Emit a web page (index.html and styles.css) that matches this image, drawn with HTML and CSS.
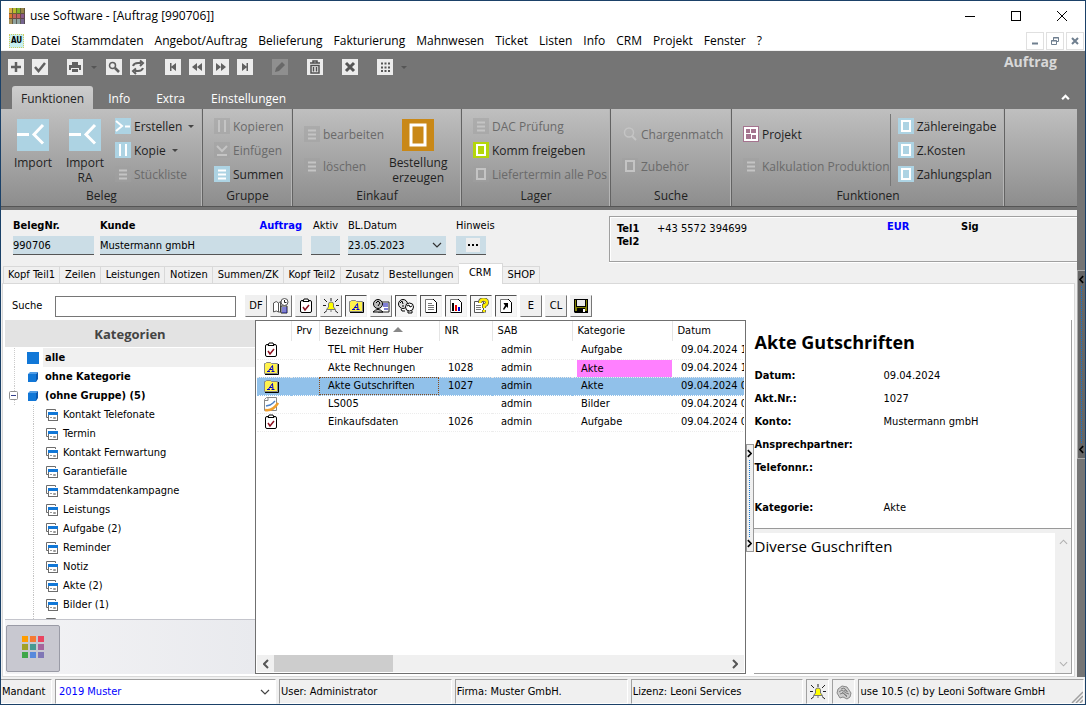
FILE: index.html
```html
<!DOCTYPE html>
<html lang="de">
<head>
<meta charset="utf-8">
<title>use Software - [Auftrag [990706]]</title>
<link rel="stylesheet" href="styles.css">
</head>
<body>
<svg class="defs" aria-hidden="true">
  <symbol id="lines" viewBox="0 0 16 16"><path d="M4 4.500h8M4 8.500h8M4 12.500h8" stroke="currentColor" stroke-width="2"/></symbol>
  <symbol id="bars" viewBox="0 0 16 16"><path d="M5 2v12M11 2v12" stroke="currentColor" stroke-width="2"/></symbol>
  <symbol id="box" viewBox="0 0 16 16"><rect x="4" y="3" width="8" height="10" fill="none" stroke="currentColor" stroke-width="2"/></symbol>
  <symbol id="create" viewBox="0 0 16 16"><path d="M1 3l6 5-6 5M10 8.500h5" fill="none" stroke="currentColor" stroke-width="2"/></symbol>
  <symbol id="paste" viewBox="0 0 16 16"><path d="M3 4l5 5 5-5M3 13h10" fill="none" stroke="currentColor" stroke-width="2"/></symbol>
  <symbol id="lens" viewBox="0 0 16 16"><circle cx="7" cy="6.500" r="4.500" fill="none" stroke="currentColor" stroke-width="1.500"/><path d="M10 10l4 4" stroke="currentColor" stroke-width="2"/></symbol>
  <symbol id="import" viewBox="0 0 32 32"><path d="M0 15.500h12M26 6L17 15.500l9 9" fill="none" stroke="currentColor" stroke-width="3"/></symbol>
  <symbol id="order" viewBox="0 0 32 32"><rect x="9" y="6" width="14" height="20" fill="none" stroke="currentColor" stroke-width="3"/></symbol>
  <symbol id="project" viewBox="0 0 16 16"><rect x=".5" y=".5" width="15" height="15" fill="#fff" stroke="#a5748f"/><path d="M3 3h4v4H3zM8 3h5v4H8zM3 8h5v5H3zM9 9h4v4H9z" fill="#a5748f"/></symbol>
  <symbol id="clip" viewBox="0 0 16 16"><rect x="2.500" y="2.500" width="11" height="12" rx="1.500" fill="#fff" stroke="#000"/><path d="M5 3.500h6L10 1H6z" fill="#fff" stroke="#000"/><path d="M5 9l2 3 4-5" fill="none" stroke="#8b1020" stroke-width="1.500"/></symbol>
  <symbol id="akte" viewBox="0 0 16 16"><path d="M1.500 13.500v-10h1l1-1h4l1 1h6v10z" fill="#fff24d" stroke="#888"/><path d="M15.500 4v10.500H2" fill="none" stroke="#000"/><path d="M4 11.500h3M5.500 11l4-5.500.5 6M6.500 9.500h3M8.500 11.500h3" fill="none" stroke="#00c"/></symbol>
  <symbol id="image" viewBox="0 0 16 16"><path d="M3.500 1.500h10v13h-12v-11z" fill="#fff" stroke="#888"/><path d="M2 4.500h3v-3" fill="none" stroke="#888"/><path d="M3 10l4-1 3-2 2-2" fill="none" stroke="#4a80c8" stroke-width="1.500"/><path d="M2 14c6 1 10-2 13-7" fill="none" stroke="#f0a030" stroke-width="2.500"/></symbol>
  <symbol id="cat" viewBox="0 0 12 12"><path d="M2 8.500H.5v-8h9V2" fill="#fff" stroke="#6c6c6c"/><rect x="2.500" y="3.500" width="9" height="8" fill="#fff" stroke="#6c6c6c"/><path d="M2 3h10v3H2z" fill="#1177d7"/><path d="M4 8.500h2M7.500 8.500h2v1h-2z" stroke="#999" fill="none"/></symbol>
  <symbol id="cube" viewBox="0 0 10 10"><path d="M0 2h8v8H0z" fill="#1177d7"/><path d="M0 2l2-2h8L8 2z" fill="#4f9ce6"/><path d="M8 2l2-2v7L8 10z" fill="#0a58b0"/></symbol>
  <symbol id="bell" viewBox="0 0 16 16"><path d="M3.500 11.500h9l-2-2.500V6Q10.500 4 8 4T5.500 6v3zM7 13h2" fill="#ff0" stroke="#777"/><path d="M8 0v3M1 1l3 3M15 1l-3 3M0 7.500h3M13 7.500h3M1 15l3-2.500M15 15l-3-2.500" stroke="#222"/></symbol>
  <symbol id="page" viewBox="0 0 16 16"><path d="M2.500 1.500h8l3 3v10h-11z" fill="#fff" stroke="#777"/><path d="M10 1l3.500 3.500v10H3" fill="none" stroke="#000"/></symbol>
  <symbol id="heads" viewBox="0 0 18 16"><circle cx="6" cy="6" r="4.500" fill="#ddd" stroke="#000"/><path d="M3 5l2-2 1 3M5 8h2M4 11l1 2h3" fill="none" stroke="#000"/><circle cx="12.500" cy="9" r="4" fill="#fff" stroke="#000"/><path d="M10 8l2-1 1 2 2-1M11 13v2h4v-2" fill="none" stroke="#000"/></symbol>
  <symbol id="down" viewBox="0 0 6 3"><path d="M0 0h6L3 3z" fill="currentColor"/></symbol>
  <symbol id="chev" viewBox="0 0 10 6"><path d="M1 1l4 4 4-4" fill="none" stroke="currentColor" stroke-width="1.200"/></symbol>
  <symbol id="left" viewBox="0 0 6 10"><path d="M5 1L1 5l4 4" fill="none" stroke="currentColor" stroke-width="2"/></symbol>
</svg>

<header class="titlebar">
  <svg class="logo" viewBox="0 0 16 16"><path fill="#d8b04a" d="M0 0h4v6H0z"/><path fill="#b9bf2c" d="M4 0h4v6H4z"/><path fill="#7fb22e" d="M8 0h4v6H8z"/><path fill="#958448" d="M12 0h4v6h-4z"/><path fill="#d97a2c" d="M0 6h4v5H0z"/><path fill="#c4605e" d="M4 6h8v5H4z"/><path fill="#8a5a8a" d="M12 6h4v5h-4z"/><path fill="#a5935a" d="M0 11h4v5H0z"/><path fill="#8fa3a0" d="M4 11h8v5H4z"/><path fill="#75658f" d="M12 11h4v5h-4z"/><path d="M3.500 0v16M7.500 0v16M11.500 0v16M15.500 0v16M0 5.500h16M0 10.500h16" stroke="#4a4038" opacity=".7"/></svg>
  <h1 class="caption">use Software - [Auftrag [990706]]</h1>
  <button class="win" aria-label="Minimieren"><svg viewBox="0 0 10 10"><path d="M0 5.500h10" stroke="#000"/></svg></button>
  <button class="win" aria-label="Maximieren"><svg viewBox="0 0 10 10"><rect x=".5" y=".5" width="9" height="9" fill="none" stroke="#000"/></svg></button>
  <button class="win" aria-label="Schließen"><svg viewBox="0 0 10 10"><path d="M0 0l10 10M10 0L0 10" stroke="#000"/></svg></button>
</header>

<nav class="menubar">
  <span class="au">AU</span>
  <button>Datei</button><button>Stammdaten</button><button>Angebot/Auftrag</button><button>Belieferung</button><button>Fakturierung</button><button>Mahnwesen</button><button>Ticket</button><button>Listen</button><button>Info</button><button>CRM</button><button>Projekt</button><button>Fenster</button><button>?</button>
  <div class="mdi">
    <button aria-label="Fenster minimieren"><svg viewBox="0 0 8 8"><path d="M1 6.500h6" stroke="#6f7f8f" stroke-width="2"/></svg></button>
    <button aria-label="Fenster wiederherstellen"><svg viewBox="0 0 8 8"><path d="M.5 3.500h5v4h-5zM0 4h6M2.500 3V.5h5v4H6M2 1h6" fill="none" stroke="#6f7f8f"/></svg></button>
    <button aria-label="Fenster schließen"><svg viewBox="0 0 8 8"><path d="M1 1l6 6M7 1L1 7" stroke="#6f7f8f" stroke-width="2"/></svg></button>
  </div>
</nav>

<section class="ribbon">
  <div class="quick">
    <button class="q" aria-label="Neu"><svg viewBox="0 0 16 16"><path d="M8 3v10M3 8h10" stroke="#606060" stroke-width="2.500"/></svg></button>
    <button class="q" aria-label="Speichern"><svg viewBox="0 0 16 16"><path d="M3 8l3.500 4L13 4" fill="none" stroke="#606060" stroke-width="2.500"/></svg></button>
    <button class="q gap" aria-label="Drucken"><svg viewBox="0 0 16 16"><path d="M5 3h6v3H5zM2 6h12v5h-2V9H4v2H2zM5 10h6v3H5z" fill="#606060"/></svg></button>
    <button class="drop" aria-label="Druckoptionen"><svg><use href="#down"/></svg></button>
    <button class="q" aria-label="Suchen"><svg viewBox="0 0 16 16"><circle cx="6.500" cy="6.500" r="3" fill="none" stroke="#606060" stroke-width="1.500"/><path d="M9 9l4 4" stroke="#606060" stroke-width="2.500"/></svg></button>
    <button class="q" aria-label="Aktualisieren"><svg viewBox="0 0 16 16"><path d="M3 7q1-3 5-3h3M10 1.500l3 2.500-3 3M13 9q-1 3-5 3H5M6 9.500L3 12l3 3" fill="none" stroke="#606060" stroke-width="2"/></svg></button>
    <button class="q gap" aria-label="Erster"><svg viewBox="0 0 16 16"><path d="M5 4h1.500v3.500L11 4v8L6.500 8.500V12H5z" fill="#606060"/></svg></button>
    <button class="q" aria-label="Zurück"><svg viewBox="0 0 16 16"><path d="M8 4v8L3 8zM13 4v8L8 8z" fill="#606060"/></svg></button>
    <button class="q" aria-label="Weiter"><svg viewBox="0 0 16 16"><path d="M3 4v8l5-4zM8 4v8l5-4z" fill="#606060"/></svg></button>
    <button class="q" aria-label="Letzter"><svg viewBox="0 0 16 16"><path d="M11 4H9.500v3.500L5 4v8l4.500-3.500V12H11z" fill="#606060"/></svg></button>
    <button class="q gap off" disabled aria-label="Bearbeiten"><svg viewBox="0 0 16 16"><path d="M3 13l1-4 6-6 3 3-6 6z" fill="#686868"/></svg></button>
    <button class="q gap" aria-label="Löschen"><svg viewBox="0 0 16 16"><path d="M3 4h10M6 4V2h4v2M4 6.500h8V14H4zM6.500 8v4.500M9.500 8v4.500" fill="none" stroke="#505050" stroke-width="1.500"/></svg></button>
    <button class="q gap" aria-label="Abbrechen"><svg viewBox="0 0 16 16"><path d="M4 4l8 8M12 4l-8 8" stroke="#555" stroke-width="3"/></svg></button>
    <button class="q gap" aria-label="Ansicht"><svg viewBox="0 0 16 16"><path d="M4 4.500h9M4 8.500h9M4 12h9" stroke="#555" stroke-width="2" stroke-dasharray="2 1.500"/></svg></button>
    <button class="drop" aria-label="Ansichtsoptionen"><svg><use href="#down"/></svg></button>
    <strong class="module">Auftrag</strong>
  </div>
  <div class="rtabs">
    <button class="rtab on">Funktionen</button><button class="rtab">Info</button><button class="rtab">Extra</button><button class="rtab">Einstellungen</button>
    <button class="collapse" aria-label="Menüband einklappen"><svg viewBox="0 0 8 6"><path d="M1 4.500L4 1.500l3 3" fill="none" stroke="#fff" stroke-width="2"/></svg></button>
  </div>
  <div class="panel">
    <div class="group g-beleg">
      <div class="gbody">
        <button class="big blue"><svg><use href="#import"/></svg>Import</button>
        <button class="big blue"><svg><use href="#import"/></svg>Import RA</button>
        <div class="col">
          <button class="rb blue"><svg><use href="#create"/></svg>Erstellen<svg class="tri"><use href="#down"/></svg></button>
          <button class="rb blue"><svg><use href="#bars"/></svg>Kopie<svg class="tri"><use href="#down"/></svg></button>
          <button class="rb" disabled><svg><use href="#lines"/></svg>Stückliste</button>
        </div>
      </div>
      <div class="glabel">Beleg</div>
    </div>
    <div class="group g-gruppe">
      <div class="gbody"><div class="col">
        <button class="rb" disabled><svg><use href="#bars"/></svg>Kopieren</button>
        <button class="rb" disabled><svg><use href="#paste"/></svg>Einfügen</button>
        <button class="rb blue"><svg><use href="#lines"/></svg>Summen</button>
      </div></div>
      <div class="glabel">Gruppe</div>
    </div>
    <div class="group g-einkauf">
      <div class="gbody">
        <div class="col two">
          <button class="rb" disabled><svg><use href="#lines"/></svg>bearbeiten</button>
          <button class="rb" disabled><svg><use href="#lines"/></svg>löschen</button>
        </div>
        <button class="big orange"><svg><use href="#order"/></svg>Bestellung erzeugen</button>
      </div>
      <div class="glabel">Einkauf</div>
    </div>
    <div class="group g-lager">
      <div class="gbody"><div class="col">
        <button class="rb" disabled><svg><use href="#lines"/></svg>DAC Prüfung</button>
        <button class="rb green"><svg><use href="#box"/></svg>Komm freigeben</button>
        <button class="rb" disabled><svg><use href="#box"/></svg>Liefertermin alle Pos</button>
      </div></div>
      <div class="glabel">Lager</div>
    </div>
    <div class="group g-suche">
      <div class="gbody"><div class="col two">
        <button class="rb plain" disabled><svg><use href="#lens"/></svg>Chargenmatch</button>
        <button class="rb" disabled><svg><use href="#box"/></svg>Zubehör</button>
      </div></div>
      <div class="glabel">Suche</div>
    </div>
    <div class="group g-funk">
      <div class="gbody">
        <div class="col two">
          <button class="rb"><svg><use href="#project"/></svg>Projekt</button>
          <button class="rb" disabled><svg><use href="#lines"/></svg>Kalkulation Produktion</button>
        </div>
        <div class="col split">
          <button class="rb blue"><svg><use href="#box"/></svg>Zählereingabe</button>
          <button class="rb blue"><svg><use href="#box"/></svg>Z.Kosten</button>
          <button class="rb blue"><svg><use href="#box"/></svg>Zahlungsplan</button>
        </div>
      </div>
      <div class="glabel">Funktionen</div>
    </div>
  </div>
</section>

<main class="main">
  <div class="content">
    <form class="head">
      <div class="fld f-nr"><label for="nr"><b>BelegNr.</b></label><input id="nr" value="990706"></div>
      <div class="fld f-kunde"><label for="kunde"><b>Kunde</b><b class="link">Auftrag</b></label><input id="kunde" value="Mustermann gmbH"></div>
      <div class="fld f-aktiv"><label for="aktiv">Aktiv</label><input id="aktiv"></div>
      <div class="fld f-datum"><label for="datum">BL.Datum</label><span class="combo"><input id="datum" value="23.05.2023"><svg><use href="#chev"/></svg></span></div>
      <div class="fld f-hin"><label for="hinweis">Hinweis</label><span class="combo"><button type="button" id="hinweis" class="dots"><svg viewBox="0 0 14 14"><path fill="#eee" d="M0 0h14v14H0z"/><path d="M2 6h2v2H2zM6 6h2v2H6zM10 6h2v2h-2z"/></svg></button></span></div>
      <div class="tel">
        <dl><dt>Tel1</dt><dd>+43 5572 394699</dd><dt>Tel2</dt><dd></dd></dl>
        <b class="link eur">EUR</b><b class="sig">Sig</b>
      </div>
    </form>
    <nav class="tabs">
      <button>Kopf Teil1</button><button>Zeilen</button><button>Leistungen</button><button>Notizen</button><button>Summen/ZK</button><button>Kopf Teil2</button><button>Zusatz</button><button>Bestellungen</button><button class="on">CRM</button><button>SHOP</button>
    </nav>
    <section class="page">
      <div class="tools">
        <label for="suche">Suche</label><input id="suche">
        <div class="btns">
          <button>DF</button>
          <button aria-label="Termine"><svg viewBox="0 0 18 16"><path d="M1.500 14V5q3-3 5 0v9q-2-2-5 0M6.500 14V5l2-1.500V14z" fill="#fff" stroke="#555"/><path d="M9 8h6v7H9z" fill="#fff" stroke="#222"/><path d="M10 10h5M10 12h5M10 14h5" stroke="#00a"/><circle cx="12.500" cy="4" r="3.500" fill="#fff" stroke="#555"/><path d="M12.500 2v2.500h2" fill="none" stroke="#222"/></svg></button>
          <button aria-label="Aufgaben"><svg><use href="#clip"/></svg></button>
          <button aria-label="Erinnerungen"><svg><use href="#bell"/></svg></button>
          <button class="in" aria-label="Akten"><svg><use href="#akte"/></svg></button>
          <button aria-label="Kampagnen"><svg viewBox="0 0 18 16"><path d="M6 4h11v10H6z" fill="#fff" stroke="#222"/><path d="M10 6h6M11 8h5M12 11h4" stroke="#00a"/><circle cx="6" cy="6" r="4.500" fill="#bbb" stroke="#000"/><path d="M1 14q5-5 10 0z" fill="#ddd" stroke="#000"/><path d="M4 5l2-2 2 2-2 3" fill="none" stroke="#000"/></svg></button>
          <button class="in" aria-label="Kontakte"><svg><use href="#heads"/></svg></button>
          <button class="in" aria-label="Dokumente"><svg viewBox="0 0 16 16"><use href="#page"/><path d="M5 5.500h4M5 7.500h6M5 9.500h6M5 11.500h6" stroke="#777"/></svg></button>
          <button class="in" aria-label="Auswertung"><svg viewBox="0 0 16 16"><use href="#page"/><path d="M5 5v8" stroke="#000" stroke-width="2"/><path d="M8 7v6" stroke="#e00" stroke-width="2"/><path d="M11 9v4" stroke="#00c" stroke-width="2"/></svg></button>
          <button class="in" aria-label="Hilfe"><svg viewBox="0 0 16 16"><path d="M1.500 3.500h9v11h-9z" fill="#fff" stroke="#555"/><path d="M3 7.500h5M3 9.500h5M3 11.500h5" stroke="#777"/><path d="M7 5Q7 1.500 10.500 1.500T14 4.500Q14 6.500 11 7.500V10M11 12v2.500" fill="none" stroke="#555" stroke-width="4"/><path d="M7 5Q7 1.500 10.500 1.500T14 4.500Q14 6.500 11 7.500V10M11 12v2" fill="none" stroke="#fe0" stroke-width="2.500"/></svg></button>
          <button class="in" aria-label="Verknüpfung"><svg viewBox="0 0 16 16"><use href="#page"/><path d="M10 5v5L8.500 8.500 6 12l-1-1 2-3.500L5.500 5z"/></svg></button>
          <button>E</button>
          <button>CL</button>
          <button aria-label="Speichern unter"><svg viewBox="0 0 16 16"><path d="M1 1h14v14H2l-1-1z"/><path d="M4 2h8v6H4z" fill="#e8e8e8"/><path d="M2 2v11h2v-3h8v3h2V2h-1v7H3V2z" fill="#808000"/><path d="M10 11h2v3h-2z" fill="#fff"/></svg></button>
        </div>
      </div>
      <div class="work">
        <aside class="side">
          <h2>Kategorien</h2>
          <ul class="tree">
            <li class="root sel"><svg class="sq" viewBox="0 0 12 12"><path fill="#1177d7" d="M0 0h12v12H0z"/></svg><b>alle</b></li>
            <li class="root"><svg class="cube"><use href="#cube"/></svg><b>ohne Kategorie</b></li>
            <li class="root"><button class="toggle" aria-label="Zuklappen"><svg viewBox="0 0 9 9"><rect x=".5" y=".5" width="8" height="8" rx="1" fill="#fff" stroke="#919191"/><path d="M2 4.500h5" stroke="#333f8c"/></svg></button><svg class="cube"><use href="#cube"/></svg><b>(ohne Gruppe) (5)</b></li>
            <li><svg><use href="#cat"/></svg>Kontakt Telefonate</li>
            <li><svg><use href="#cat"/></svg>Termin</li>
            <li><svg><use href="#cat"/></svg>Kontakt Fernwartung</li>
            <li><svg><use href="#cat"/></svg>Garantiefälle</li>
            <li><svg><use href="#cat"/></svg>Stammdatenkampagne</li>
            <li><svg><use href="#cat"/></svg>Leistungs</li>
            <li><svg><use href="#cat"/></svg>Aufgabe (2)</li>
            <li><svg><use href="#cat"/></svg>Reminder</li>
            <li><svg><use href="#cat"/></svg>Notiz</li>
            <li><svg><use href="#cat"/></svg>Akte (2)</li>
            <li><svg><use href="#cat"/></svg>Bilder (1)</li>
            <li><svg><use href="#cat"/></svg></li>
          </ul>
          <div class="foot"><button aria-label="Kategorien"><svg viewBox="0 0 22 22"><path fill="#ff9d00" d="M0 0h6v6H0z"/><path fill="#f57a33" d="M8 0h6v6H8z"/><path fill="#ea4560" d="M16 0h6v6h-6z"/><path fill="#a1a127" d="M0 8h6v6H0z"/><path fill="#479991" d="M8 8h6v6H8z"/><path fill="#a5659c" d="M16 8h6v6h-6z"/><path fill="#3fa648" d="M0 16h6v6H0z"/><path fill="#5789dc" d="M8 16h6v6H8z"/><path fill="#8077b6" d="M16 16h6v6h-6z"/></svg></button></div>
        </aside>
        <div class="grid">
          <div class="scroll">
            <table>
              <colgroup><col class="c0"><col class="c1"><col class="c2"><col class="c3"><col class="c4"><col class="c5"><col class="c6"></colgroup>
              <thead><tr><th></th><th>Prv</th><th>Bezeichnung <svg class="sort" viewBox="0 0 10 5"><path d="M0 5h10L5 0z" fill="#888"/></svg></th><th>NR</th><th>SAB</th><th>Kategorie</th><th>Datum</th></tr></thead>
              <tbody>
                <tr><td><svg><use href="#clip"/></svg></td><td></td><td>TEL mit Herr Huber</td><td></td><td>admin</td><td>Aufgabe</td><td>09.04.2024 1</td></tr>
                <tr><td><svg><use href="#akte"/></svg></td><td></td><td>Akte Rechnungen</td><td>1028</td><td>admin</td><td><span class="pink">Akte</span></td><td>09.04.2024 1</td></tr>
                <tr class="sel"><td><svg><use href="#akte"/></svg></td><td></td><td class="focus">Akte Gutschriften</td><td>1027</td><td>admin</td><td>Akte</td><td>09.04.2024 0</td></tr>
                <tr><td><svg><use href="#image"/></svg></td><td></td><td>LS005</td><td></td><td>admin</td><td>Bilder</td><td>09.04.2024 0</td></tr>
                <tr><td><svg><use href="#clip"/></svg></td><td></td><td>Einkaufsdaten</td><td>1026</td><td>admin</td><td>Aufgabe</td><td>09.04.2024 0</td></tr>
              </tbody>
            </table>
          </div>
          <div class="hbar"><button aria-label="Nach links"><svg><use href="#left"/></svg></button><span class="thumb"></span><button class="r" aria-label="Nach rechts"><svg><use href="#left"/></svg></button></div>
        </div>
        <div class="gutter"><div class="grip"><svg><use href="#left"/></svg><i></i><svg><use href="#left"/></svg></div></div>
        <article class="detail">
          <div class="info">
            <h2>Akte Gutschriften</h2>
            <dl><dt>Datum:</dt><dd>09.04.2024</dd><dt>Akt.Nr.:</dt><dd>1027</dd><dt>Konto:</dt><dd>Mustermann gmbH</dd><dt>Ansprechpartner:</dt><dd></dd><dt>Telefonnr.:</dt><dd></dd><dt class="last">Kategorie:</dt><dd class="last">Akte</dd></dl>
          </div>
          <div class="note">
            <p>Diverse Guschriften</p>
            <div class="vbar"><svg class="up"><use href="#chev"/></svg><svg><use href="#chev"/></svg></div>
          </div>
        </article>
      </div>
    </section>
  </div>
  <div class="rail"><div class="railgrip"><svg><use href="#left"/></svg><i></i><svg><use href="#left"/></svg></div></div>
</main>

<footer class="status">
  <label class="s s-mand" for="mandant">Mandant</label>
  <div class="s s-sel"><select id="mandant"><option>2019 Muster</option></select><svg><use href="#chev"/></svg></div>
  <div class="s s-txt">User: Administrator</div>
  <div class="s s-txt">Firma: Muster GmbH.</div>
  <div class="s s-txt">Lizenz: Leoni Services</div>
  <div class="s s-ico"><svg><use href="#bell"/></svg></div>
  <div class="s s-ico"><svg viewBox="0 0 16 16"><path d="M1 9l1-4 4-3 5 1 2 3 2 3-1 4-3 2-4-2-3 1z" fill="#ccc" stroke="#888"/><path d="M3 8l3-2 4 3 3 1M5 5l3-1 3 3M4 10l3-1 4 4M8 6l4 2M6 8l5 4" fill="none" stroke="#808080"/></svg></div>
  <div class="s s-last">use 10.5 (c) by Leoni Software GmbH<svg viewBox="0 0 12 12"><path d="M1 12L12 1M5 12l7-7M9 12l3-3" stroke="#a0a0a0" stroke-width="1.500"/></svg></div>
</footer>
</body>
</html>
```
FILE: styles.css
```css
:root {
  --ui: "Open Sans", "Noto Sans", sans-serif;
  --form: "DejaVu Sans Condensed", "Noto Sans", sans-serif;
}
* { box-sizing: border-box; }
body {
  margin: 0;
  height: 100vh;
  display: flex;
  flex-direction: column;
  overflow: hidden;
  border: 1px solid #1b4168;
  background: #f0f0f0;
  color: #000;
  font: 11px/14px var(--form);
}
button, input, select { font: inherit; color: inherit; margin: 0; padding: 0; border: 0; background: none; border-radius: 0; outline: 0; }
h1, h2, p, ul, dl, dd { margin: 0; padding: 0; font-size: inherit; font-weight: normal; }
svg { display: block; flex: none; width: 16px; height: 16px; }
.defs { position: absolute; width: 0; height: 0; }
.link { color: #00f; }

/* title and menu */
.titlebar { flex: none; display: flex; align-items: center; height: 29px; background: #fff; padding-left: 8px; font: 12px/16px var(--ui); }
.caption { flex: 1; margin-left: 5px; }
.win { width: 46px; height: 28px; display: grid; place-items: center; }
.win svg { width: 10px; height: 10px; }
.menubar { flex: none; display: flex; align-items: center; height: 21px; background: #fff; border-bottom: 1px solid #f0f0f0; padding: 1px 0 0 8px; font: 12px/16px var(--ui); white-space: nowrap; }
.menubar > button { padding: 0 5px 0 6px; }
.au { width: 15px; height: 14px; margin-right: 1px; background: #c8f0f0; border: 1px dotted #d0cc60; font: bold 8px/12px "DejaVu Sans Condensed", sans-serif; text-align: center; }
.mdi { margin-left: auto; display: flex; gap: 2px; padding-right: 1px; }
.mdi button { width: 18px; height: 18px; border: 1px solid #e0e0e0; display: grid; place-items: center; }
.mdi svg { width: 8px; height: 8px; }

/* ribbon */
.ribbon { flex: none; background: #757575; padding-bottom: 3px; font: 12px/15px var(--ui); }
.quick { display: flex; align-items: center; gap: 8px; height: 32px; padding-left: 7px; }
.q { width: 16px; height: 16px; background: #ececec; }
.q.gap { margin-left: 11px; }
.q.off { background: #8f8f8f; }
.drop { width: 7px; color: #555; }
.drop svg { width: 6px; height: 3px; }
.module { margin: -10px 28px 0 auto; color: #d8d8d8; font: bold 14px/18px var(--ui); }
.rtabs { display: flex; align-items: flex-end; height: 26px; padding-left: 11px; color: #fff; }
.rtab { height: 23px; padding: 2px 13px 0; }
.rtab.on { padding: 2px 9px 0; margin-right: 2px; background: linear-gradient(#cdcdcd, #bebebe); border-radius: 3px 3px 0 0; color: #222; }
.collapse { margin: 0 15px 8px auto; }
.collapse svg { width: 9px; height: 7px; }
.panel { display: flex; height: 98px; margin-right: 8px; background: linear-gradient(#bfbfbf, #8d8d8d); border-bottom: 1px solid #555; color: #1f1f1f; white-space: nowrap; }
.group { flex: none; display: flex; flex-direction: column; border-right: 1px solid #636363; box-shadow: inset -1px 0 #b5b5b5; padding-top: 5px; }
.gbody { flex: 1; display: flex; align-items: flex-start; padding-left: 11px; }
.glabel { text-align: center; padding-bottom: 3px; }
.g-beleg { width: 202px; }
.g-beleg .gbody { padding-left: 6px; }
.g-gruppe { width: 90px; }
.g-einkauf { width: 169px; }
.g-lager { width: 149px; }
.g-suche { width: 121px; }
.g-funk { width: 273px; }
.big { width: 52px; padding: 5px 4px 0; display: flex; flex-direction: column; align-items: center; white-space: normal; color: #1f1f1f; }
.big svg { width: 32px; height: 32px; margin-bottom: 4px; color: #fff; }
.orange { width: 68px; padding: 5px 0 0; }
.col { display: flex; flex-direction: column; }
.g-beleg .col { margin-left: 4px; }
.rb { display: flex; align-items: center; gap: 3px; height: 24px; }
.two .rb { height: 32px; padding-bottom: 8px; }
.two { padding-top: 8px; }
.rb svg { color: #c4c4c4; background: rgba(160, 160, 160, .5); }
.rb.plain svg { background: none; }
.rb:disabled { color: #6a6a6a; }
.blue svg { background: #add3e3; color: #fff; }
.green svg { background: #b4d60c; color: #fff; }
.orange svg { background: #c98817; color: #fff; }
.rb .tri { width: 6px; height: 3px; margin-left: 3px; background: none; color: #444; }
.split { padding-left: 7px; border-left: 1px solid #777; }

/* document header */
.main { flex: 1; display: flex; min-height: 0; }
.content { flex: 1; min-width: 0; display: flex; flex-direction: column; }
.head { flex: none; display: flex; padding: 7px 0 0 12px; height: 53px; }
.fld { flex: none; margin-right: 6px; }
.fld label { display: flex; justify-content: space-between; line-height: 18px; height: 19px; }
.fld input { display: block; width: 100%; height: 19px; background: #cbdde6; border-bottom: 1px solid #555; }
.f-nr { width: 81px; }
.f-kunde { width: 202px; margin-right: 9px; }
.f-aktiv { width: 29px; margin-right: 8px; }
.f-aktiv label { padding-left: 2px; }
.f-datum { width: 98px; margin-right: 10px; }
.f-hin { width: 38px; }
.combo { position: relative; display: block; }
.combo > svg { position: absolute; right: 4px; top: 6px; width: 10px; height: 6px; color: #333; }
.dots { width: 30px; height: 19px; background: #cbdde6; border-bottom: 1px solid #555; padding: 0 6px 0 10px; }
.dots svg { width: 14px; height: 14px; }
.tel { flex: 1; margin: -1px 0 0 109px; height: 46px; border: 1px solid #a0a0a0; border-right: 0; box-shadow: inset 1px 1px #fff, 0 1px #fff; padding: 5px 0 0 7px; display: flex; line-height: 13px; }
.tel dl { display: grid; grid-template-columns: 40px 230px; align-content: start; }
.tel dt { font-weight: bold; }
.eur { width: 74px; margin-top: -2px; }
.sig { margin-top: -2px; }

/* document tabs */
.tabs { flex: none; display: flex; align-items: flex-end; height: 21px; padding-left: 2px; margin-bottom: -1px; position: relative; white-space: nowrap; }
.tabs button { height: 18px; padding: 0 4px 0 5px; border: 1px solid #d9d9d9; border-left: 0; }
.tabs button:first-child { border-left: 1px solid #d9d9d9; padding-left: 4px; }
.tabs .on { height: 21px; width: 44px; background: #fff; border-bottom: 0; padding: 0 4px 3px; }
.page { flex: 1; min-height: 0; margin: 0 2px 1px 1px; padding: 10px 2px 2px 2px; background: #fff; border: 1px solid #d9d9d9; display: flex; flex-direction: column; }
.tools { flex: none; display: flex; align-items: center; height: 24px; padding-left: 7px; }
.tools label { width: 43px; }
.tools > input { width: 181px; height: 21px; border: 1px solid #767676; background: #fff; }
.btns { display: flex; gap: 3px; margin-left: 9px; }
.btns button { width: 22px; height: 22px; display: grid; place-items: center; background: #f0f0f0; border: 1px solid #f0f0f0; border-right-color: #777; border-bottom-color: #777; }
.btns .in { background: #f6f6f6; border-color: #555 #f0f0f0 #f0f0f0 #555; }
.btns svg { width: 18px; height: 16px; }

/* work area */
.work { flex: 1; min-height: 0; margin-top: 2px; display: flex; }
.side { flex: none; width: 250px; display: flex; flex-direction: column; }
.side h2 { flex: none; height: 27px; background: #e3e3e3; color: #444; font: bold 13px/28px var(--ui); text-align: center; }
.tree { flex: 1; min-height: 0; overflow: hidden; list-style: none; padding-top: 1px; }
.tree li { display: flex; align-items: center; height: 19px; margin-left: 28px; padding-left: 12px; border-left: 1px dotted #c4c4c4; }
.tree li svg { width: 12px; height: 12px; margin-right: 5px; }
.tree li.root { margin-left: 9px; border-color: #ccc; }
.tree li.root .cube { width: 10px; height: 10px; margin: 0 7px 0 1px; }
.tree li.root .sq { margin-right: 6px; }
.tree .sel { background: linear-gradient(#f0f0f0, #f0f0f0) 28px 0 no-repeat; }
.toggle { margin: 0 9px 0 -18px; }
.tree .toggle svg { width: 9px; height: 9px; margin: 0; }
.foot { flex: none; height: 55px; border-top: 1px solid #c4c5cc; background: linear-gradient(90deg, #f3f3f5, #e9eaee); padding: 5px 1px; }
.foot button { width: 54px; height: 47px; padding-bottom: 4px; border: 1px solid #9a9ba6; border-radius: 2px; background: #c8c8d0; display: grid; place-items: center; }
.foot svg { width: 22px; height: 22px; }
.grid { flex: 489 1 0; min-width: 0; border: 1px solid #707070; padding: 0 1px 1px; display: flex; flex-direction: column; }
.scroll { flex: 1; overflow: hidden; }
table { table-layout: fixed; width: 520px; border-collapse: collapse; white-space: nowrap; }
.c0 { width: 34px; } .c1 { width: 28px; } .c2 { width: 120px; } .c3 { width: 53px; } .c4 { width: 80px; } .c5 { width: 100px; }
th { height: 20px; padding: 0 0 0 5px; font-weight: normal; text-align: left; border-right: 1px solid #e5e5e5; }
td { height: 18px; padding: 0 0 0 9px; border-bottom: 1px dotted #ececec; }
td:first-child { padding-left: 6px; }
.sort { display: inline-block; width: 10px; height: 5px; margin: 0 0 2px 2px; }
.pink { display: block; margin: 0 0 0 -4px; padding-left: 4px; height: 17px; line-height: 17px; background: #ff80ff; }
tr.sel td { background: #91c1ea; border-bottom-color: #91c1ea; }
tr.sel .focus { outline: 1px dotted #8a4a18; outline-offset: -1px; }
.hbar { flex: none; display: flex; height: 17px; background: #f0f0f0; color: #555; }
.hbar button { width: 17px; display: grid; place-items: center; }
.hbar svg { width: 6px; height: 10px; }
.hbar .r { margin-left: auto; transform: scaleX(-1); }
.thumb { width: 119px; background: #cdcdcd; }
.gutter { flex: none; width: 8px; padding-top: 124px; }
.grip { height: 108px; border: 1px solid #999; background: #f0f0f0; display: flex; flex-direction: column; align-items: center; padding: 4px 0 3px; }
.grip svg { width: 5px; height: 9px; transform: scaleX(-1); }
.grip i, .railgrip i { flex: 1; width: 2px; margin: 2px 0; border-left: 1px dotted #1177d7; }
.detail { flex: 319 1 0; min-width: 0; display: flex; flex-direction: column; border-right: 1px solid #a0a0a0; border-bottom: 1px solid #a0a0a0; }
.info { flex: none; height: 209px; padding: 10px 0 0 1px; border-bottom: 1px solid #999; }
.info h2 { font: bold 18px/24px var(--ui); }
.info dl { display: grid; grid-template-columns: 129px 1fr; grid-auto-rows: 23px; padding-top: 15px; line-height: 14px; }
.info dt { font-weight: bold; }
.info .last { padding-top: 17px; }
.note { flex: 1; display: flex; border-top: 4px solid #f0f0f0; font: 15px/22px var(--ui); }
.note p { flex: 1; padding: 2px 0 0 1px; }
.vbar { width: 16px; background: #f0f0f0; color: #b0b0b0; display: flex; flex-direction: column; justify-content: space-between; align-items: center; padding: 6px 0; }
.vbar svg { width: 9px; height: 6px; }
.vbar .up { transform: scaleY(-1); }
.rail { flex: none; width: 8px; background: #757575; padding-top: 60px; margin-bottom: 1px; }
.railgrip { height: 189px; border: 1px solid #aaa; border-right: 0; background: #666; display: flex; flex-direction: column; align-items: center; padding: 4px 0; }
.railgrip svg { width: 5px; height: 9px; color: #000; }

/* status bar */
.status { flex: none; display: flex; gap: 3px; height: 26px; padding: 1px 1px 0 0; }
.s { border: 1px solid #a0a0a0; border-right-color: #fff; border-bottom-color: #fff; padding: 1px 0 0 1px; display: flex; align-items: center; white-space: nowrap; }
.s-mand { width: 51px; border-left: 0; }
.s-sel { width: 221px; position: relative; background: #fff; color: #00f; }
.s-sel select { appearance: none; flex: 1; height: 20px; padding-left: 2px; }
.s-sel svg { position: absolute; right: 5px; width: 10px; height: 6px; color: #444; pointer-events: none; }
.s-txt { flex: 174 1 0; min-width: 0; }
.s-ico { width: 23px; padding: 0; justify-content: center; }
.s-last { flex: 228 1 0; justify-content: space-between; }
.s-last svg { align-self: flex-end; width: 12px; height: 12px; }
```
